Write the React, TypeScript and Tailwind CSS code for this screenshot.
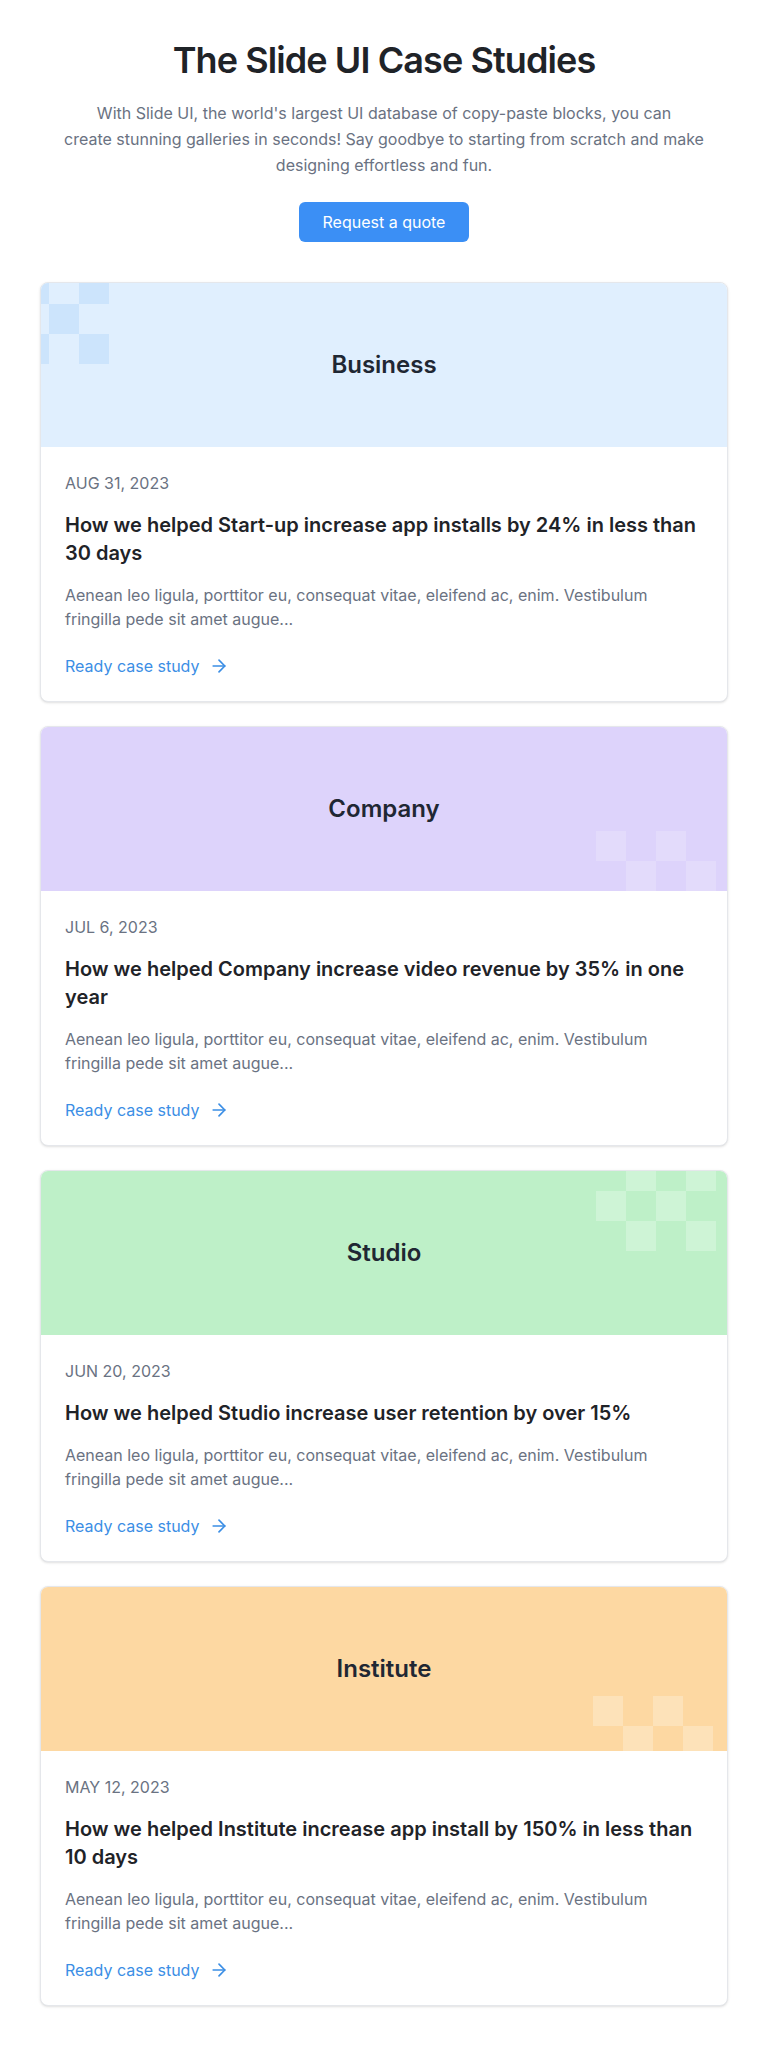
import { ArrowRight } from 'lucide-react';

type Study = {
	label: string;
	date: string;
	title: string;
	headerBg: string;
	cellBg: string;
	pattern: number[][];
	patternPos: string;
	cols: string;
};

const excerpt =
	'Aenean leo ligula, porttitor eu, consequat vitae, eleifend ac, enim. Vestibulum fringilla pede sit amet augue...';

const studies: Study[] = [
	{
		label: 'Business',
		date: 'AUG 31, 2023',
		title: 'How we helped Start-up increase app installs by 24% in less than 30 days',
		headerBg: 'bg-[#e0effe]',
		cellBg: 'bg-[#cce4fc]',
		pattern: [
			[1, 0, 1],
			[0, 1, 0],
			[1, 0, 1],
		],
		patternPos: '-left-[22px] -top-[9px]',
		cols: 'grid-cols-3',
	},
	{
		label: 'Company',
		date: 'JUL 6, 2023',
		title: 'How we helped Company increase video revenue by 35% in one year',
		headerBg: 'bg-[#ddd3fb]',
		cellBg: 'bg-white/20',
		pattern: [
			[1, 0, 1, 0],
			[0, 1, 0, 1],
		],
		patternPos: 'right-[11px] bottom-0',
		cols: 'grid-cols-4',
	},
	{
		label: 'Studio',
		date: 'JUN 20, 2023',
		title: 'How we helped Studio increase user retention by over 15%',
		headerBg: 'bg-[#bef0c8]',
		cellBg: 'bg-white/25',
		pattern: [
			[0, 1, 0, 1],
			[1, 0, 1, 0],
			[0, 1, 0, 1],
		],
		patternPos: 'right-[11px] -top-[10px]',
		cols: 'grid-cols-4',
	},
	{
		label: 'Institute',
		date: 'MAY 12, 2023',
		title: 'How we helped Institute increase app install by 150% in less than 10 days',
		headerBg: 'bg-[#fdd8a2]',
		cellBg: 'bg-white/25',
		pattern: [
			[1, 0, 1, 0],
			[0, 1, 0, 1],
		],
		patternPos: 'right-[14px] -bottom-[5px]',
		cols: 'grid-cols-4',
	},
];

export default function App() {
	return (
		<div className="min-h-screen bg-white font-['Inter','Noto_Sans',sans-serif]">
			<main className="px-10 pt-10 pb-10">
				{/* Intro */}
				<section className="flex flex-col items-center text-center">
					<h1 className="text-4xl font-semibold leading-10 tracking-tight text-[#1f2328]">
						The Slide UI Case Studies
					</h1>
					<p className="mt-5 max-w-[660px] text-base leading-[26px] text-gray-500">
						With Slide UI, the world's largest UI database of copy-paste blocks, you can
						<br />
						create stunning galleries in seconds! Say goodbye to starting from scratch and make
						designing effortless and fun.
					</p>
					<button className="mt-6 h-10 rounded-md bg-[#3b8ff5] px-6 text-base text-white">
						Request a quote
					</button>
				</section>

				{/* Case studies */}
				<section className="mt-10 flex flex-col gap-6">
					{studies.map((s) => (
						<article
							key={s.label}
							className="overflow-hidden rounded-lg border border-gray-200 bg-white shadow-sm"
						>
							<div
								className={`relative flex h-[164px] items-center justify-center overflow-hidden ${s.headerBg}`}
							>
								<div className={`absolute grid ${s.cols} ${s.patternPos}`}>
									{s.pattern.flat().map((on, i) => (
										<div
											key={i}
											className={`h-[30px] w-[30px] ${on ? s.cellBg : ''}`}
										/>
									))}
								</div>
								<h2 className="relative text-2xl font-semibold text-[#1f2733]">{s.label}</h2>
							</div>
							<div className="p-6">
								<p className="text-base leading-6 text-gray-500">{s.date}</p>
								<h3 className="mt-4 text-xl font-semibold leading-7 text-[#1f2328]">
									{s.title}
								</h3>
								<p className="mt-4 text-base leading-6 text-gray-500">{excerpt}</p>
								<a
									href="#"
									className="mt-6 flex items-center gap-2.5 text-base leading-[22px] text-[#3b8ee5]"
								>
									Ready case study
									<ArrowRight className="h-5 w-5" strokeWidth={2} />
								</a>
							</div>
						</article>
					))}
				</section>
			</main>
		</div>
	);
}
